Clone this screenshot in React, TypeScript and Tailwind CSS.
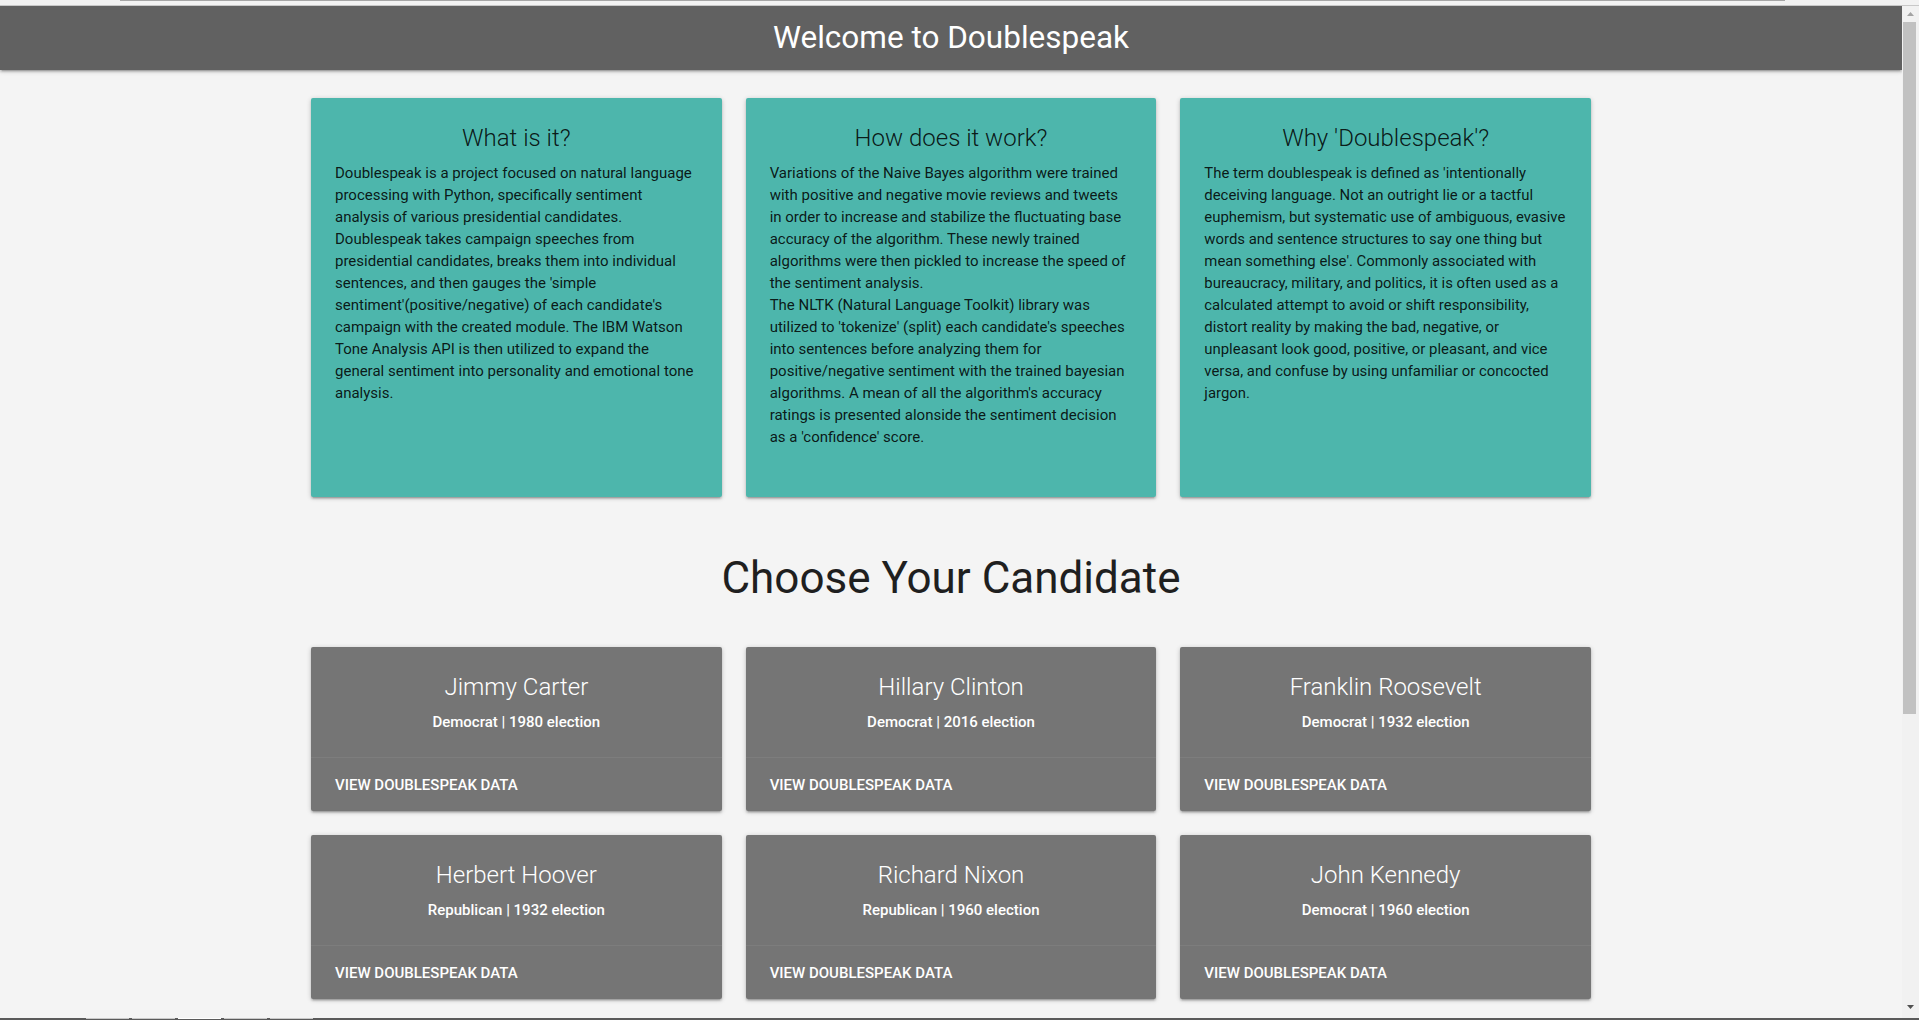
import React from "react";

const info = [
  {
    title: "What is it?",
    size: "text-[15px]",
    paras: [
      "Doublespeak is a project focused on natural language processing with Python, specifically sentiment analysis of various presidential candidates. Doublespeak takes campaign speeches from presidential candidates, breaks them into individual sentences, and then gauges the 'simple sentiment'(positive/negative) of each candidate's campaign with the created module. The IBM Watson Tone Analysis API is then utilized to expand the general sentiment into personality and emotional tone analysis.",
    ],
  },
  {
    title: "How does it work?",
    size: "text-[15px]",
    paras: [
      "Variations of the Naive Bayes algorithm were trained with positive and negative movie reviews and tweets in order to increase and stabilize the fluctuating base accuracy of the algorithm. These newly trained algorithms were then pickled to increase the speed of the sentiment analysis.",
      "The NLTK (Natural Language Toolkit) library was utilized to 'tokenize' (split) each candidate's speeches into sentences before analyzing them for positive/negative sentiment with the trained bayesian algorithms. A mean of all the algorithm's accuracy ratings is presented alonside the sentiment decision as a 'confidence' score.",
    ],
  },
  {
    title: "Why 'Doublespeak'?",
    size: "text-[14.9px]",
    paras: [
      "The term doublespeak is defined as 'intentionally deceiving language. Not an outright lie or a tactful euphemism, but systematic use of ambiguous, evasive words and sentence structures to say one thing but mean something else'. Commonly associated with bureaucracy, military, and politics, it is often used as a calculated attempt to avoid or shift responsibility, distort reality by making the bad, negative, or unpleasant look good, positive, or pleasant, and vice versa, and confuse by using unfamiliar or concocted jargon.",
    ],
  },
];

const candidates = [
  { name: "Jimmy Carter", sub: "Democrat | 1980 election" },
  { name: "Hillary Clinton", sub: "Democrat | 2016 election" },
  { name: "Franklin Roosevelt", sub: "Democrat | 1932 election" },
  { name: "Herbert Hoover", sub: "Republican | 1932 election" },
  { name: "Richard Nixon", sub: "Republican | 1960 election" },
  { name: "John Kennedy", sub: "Democrat | 1960 election" },
];

const shadow =
  "shadow-[0_2px_2px_0_rgba(0,0,0,0.14),0_3px_1px_-2px_rgba(0,0,0,0.12),0_1px_5px_0_rgba(0,0,0,0.2)]";

export default function App() {
  return (
    <div
      className="h-screen w-full flex flex-col overflow-hidden bg-[#f4f4f4]"
      style={{ fontFamily: "Roboto, 'Noto Sans', sans-serif" }}
    >
      {/* browser top strip */}
      <div className="h-[6px] shrink-0 bg-[#f2f2f2] border-b border-[#c8c8c8] flex">
        <div className="ml-[120px] w-[1665px] h-[1px] bg-[#a6a6a6]" />
      </div>

      <div className="flex flex-1 min-h-0">
        <main className="flex-1 min-w-0 overflow-hidden">
          <header
            className={`h-16 bg-[#616161] flex items-center justify-center ${shadow}`}
          >
            <h1 className="text-[31.5px] leading-[64px] text-white font-normal">
              Welcome to Doublespeak
            </h1>
          </header>

          <div className="w-[1280px] mx-auto pt-[28px]">
            <div className="grid grid-cols-3 gap-x-6">
              {info.map((c) => (
                <div
                  key={c.title}
                  className={`h-[399px] bg-[#4db6ac] rounded-[2px] p-6 text-black/[0.87] ${shadow}`}
                >
                  <div className="text-[24px] leading-[32px] font-light text-center mb-2">
                    {c.title}
                  </div>
                  {c.paras.map((p, i) => (
                    <p key={i} className={`${c.size} leading-[22px]`}>
                      {p}
                    </p>
                  ))}
                </div>
              ))}
            </div>

            <h2 className="mt-[57px] text-center text-[44px] leading-[48px] font-normal text-[#1f1f1f]">
              Choose Your Candidate
            </h2>

            <div className="mt-[45px] grid grid-cols-3 gap-x-6 gap-y-6">
              {candidates.map((c) => (
                <div
                  key={c.name}
                  className={`bg-[#757575] rounded-[2px] text-white ${shadow}`}
                >
                  <div className="p-6 text-center">
                    <div className="text-[24px] leading-[32px] font-light mb-2">
                      {c.name}
                    </div>
                    <p className="text-[15px] leading-[22px] font-medium">
                      {c.sub}
                    </p>
                  </div>
                  <div className="border-t border-[rgba(160,160,160,0.2)] px-6 pt-4 pb-[15px]">
                    <span className="block text-[15px] leading-[22px] font-medium uppercase">
                      View Doublespeak Data
                    </span>
                  </div>
                </div>
              ))}
            </div>
          </div>
        </main>

        {/* scrollbar */}
        <div className="w-[17px] shrink-0 bg-[#f1f1f1] flex flex-col items-center">
          <svg width="9" height="6" viewBox="0 0 9 6" className="mt-[5px]">
            <polygon points="4.5,1 8,5 1,5" fill="#a3a3a3" />
          </svg>
          <div className="mt-[5px] w-[13px] h-[692px] bg-[#c1c1c1] ml-[-2px]" />
          <div className="flex-1" />
          <svg width="9" height="6" viewBox="0 0 9 6" className="mb-[8px]">
            <polygon points="1,1 8,1 4.5,5" fill="#505050" />
          </svg>
        </div>
      </div>

      {/* bottom bar */}
      <div className="h-[2px] shrink-0 bg-[#5a5a5a] flex gap-[3px] pl-[86px]">
        <div className="w-[43px] h-[1px] bg-[#c8c8c8]" />
        <div className="w-[43px] h-[1px] bg-[#c8c8c8]" />
        <div className="w-[43px] h-[1px] bg-[#ffffff]" />
        <div className="w-[43px] h-[1px] bg-[#c8c8c8]" />
        <div className="w-[43px] h-[1px] bg-[#c8c8c8]" />
      </div>
    </div>
  );
}
